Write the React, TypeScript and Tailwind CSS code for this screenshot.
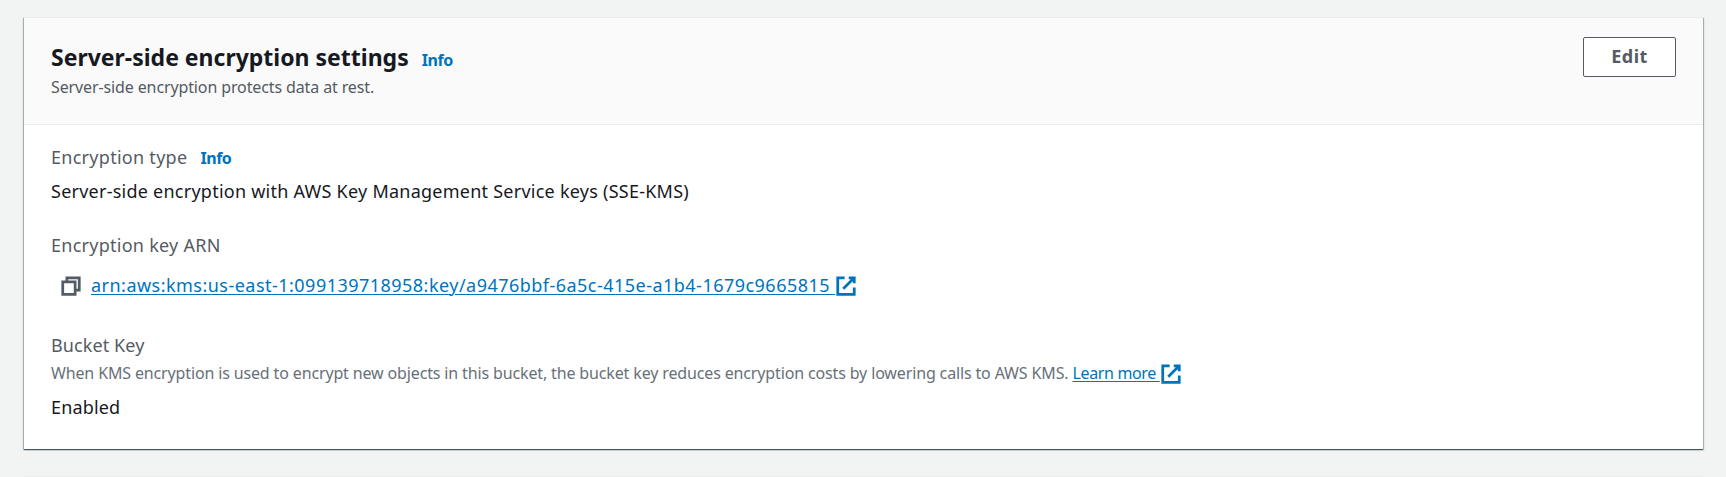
function ExternalIcon() {
  return (
    <svg viewBox="0 0 16 16" className="block size-[22px] shrink-0 translate-y-px" fill="none" stroke="currentColor" strokeWidth="2">
      <path d="M10 2h4v4M6 10l8-8M14 9.05V14H2V2h5" />
    </svg>
  );
}

function CopyIcon() {
  return (
    <svg viewBox="0 0 16 16" className="block size-[22px] shrink-0 translate-y-px" fill="none" stroke="currentColor" strokeWidth="2">
      <path d="M2 5h9v9H2zM5 5V2h9v9h-3" />
    </svg>
  );
}

function Info() {
  return (
    <a href="#info" className="text-[16px] leading-[22px] font-bold tracking-[-0.45px] text-[#0073bb]">
      Info
    </a>
  );
}

export default function App() {
  return (
    <div className="flex h-[477px] flex-col overflow-hidden bg-[#f2f3f3] px-6 pt-[17px] font-['Noto_Sans',sans-serif] text-[18px] leading-[22px] whitespace-nowrap text-[#16191f]">
      <section className="h-[432px] w-[1679px] shrink-0 border-t border-[#eaeded] bg-white shadow-[0_1px_1px_0_rgba(0,28,36,0.5),1px_1px_1px_0_rgba(0,28,36,0.25),-1px_1px_1px_0_rgba(0,28,36,0.25)]">
        <header className="flex h-[107px] items-start justify-between border-b border-[#eaeded] bg-[#fafafa] px-[27px]">
          <div className="pt-[25px]">
            <div className="flex items-baseline gap-[13px]">
              <h2 className="text-[23px] leading-[28px] font-bold">Server-side encryption settings</h2>
              <Info />
            </div>
            <p className="mt-[5px] text-[16px] tracking-[-0.12px] text-[#545b64]">Server-side encryption protects data at rest.</p>
          </div>
          <button className="mt-[19px] h-10 w-[93px] rounded-[2px] border border-[#545b64] bg-white pb-[2px] text-center font-bold tracking-[0.5px] text-[#545b64]">
            Edit
          </button>
        </header>

        <div className="pl-[27px]">
          <div className="flex items-baseline gap-[13px] pt-[21px]">
            <span className="tracking-[0.28px] text-[#545b64]">Encryption type</span>
            <Info />
          </div>
          <p className="mt-[11px] tracking-[0.245px]">Server-side encryption with AWS Key Management Service keys (SSE-KMS)</p>

          <p className="mt-8 tracking-[0.26px] text-[#545b64]">Encryption key ARN</p>
          <div className="mt-[18px] flex items-center">
            <span className="ml-[9px] text-[#545b64]">
              <CopyIcon />
            </span>
            <a href="#key" className="ml-[9px] flex items-center text-[#0073bb]">
              <span className="tracking-[0.475px] whitespace-pre underline decoration-1 underline-offset-2">
                {"arn:aws:kms:us-east-1:099139718958:key/a9476bbf-6a5c-415e-a1b4-1679c9665815 "}
              </span>
              <ExternalIcon />
            </a>
          </div>

          <p className="mt-[38px] tracking-[0.1px] text-[#545b64]">Bucket Key</p>
          <div className="mt-[6px] flex items-center text-[16px] text-[#687078]">
            <span className="whitespace-pre tracking-[-0.142px]">
              {"When KMS encryption is used to encrypt new objects in this bucket, the bucket key reduces encryption costs by lowering calls to AWS KMS. "}
            </span>
            <a href="#learn" className="flex items-center text-[#0073bb]">
              <span className="tracking-[-0.35px] whitespace-pre underline decoration-1 underline-offset-2">{"Learn more "}</span>
              <ExternalIcon />
            </a>
          </div>
          <p className="mt-3 tracking-[0.15px]">Enabled</p>
        </div>
      </section>
      <section className="mt-[27px] h-10 w-[1679px] shrink-0 border-t border-[#eaeded] bg-[#fafafa]" />
    </div>
  );
}
